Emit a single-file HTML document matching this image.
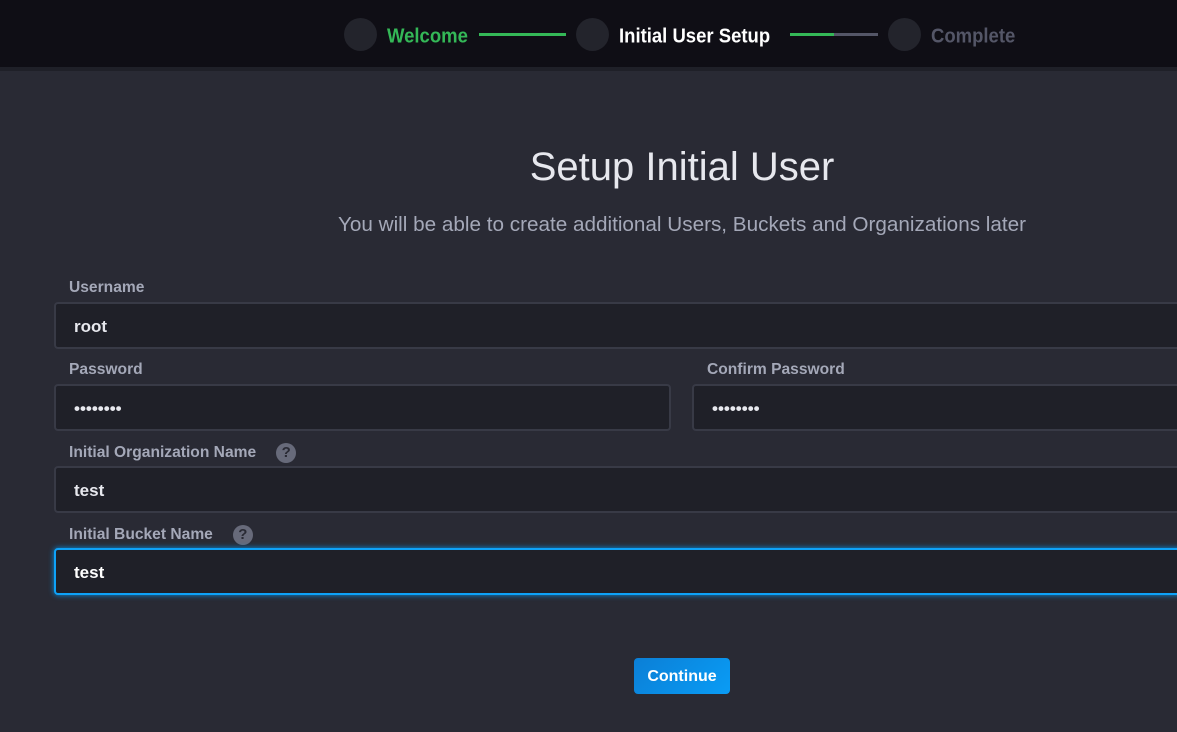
<!DOCTYPE html>
<html><head><style>
*{box-sizing:border-box;margin:0;padding:0}
body{width:1177px;height:732px;overflow:hidden;background:#292a34;font-family:"Liberation Sans",sans-serif;position:relative}
.hdr{position:absolute;left:0;top:0;width:1177px;height:67px;background:#0f0e15}
.strip{position:absolute;left:0;top:67px;width:1177px;height:4px;background:#1f2028}
.c{position:absolute;top:18px;width:33px;height:33px;border-radius:50%;background:#23242c}
.st{position:absolute;top:24px;font-weight:bold;font-size:18.5px;transform:scaleY(1.08);transform-origin:left top}
.ln{position:absolute;top:33px;height:3px}
h1{position:absolute;top:145px;left:0;width:1364px;text-align:center;font-weight:normal;font-size:40px;color:#e7e8ee}
.sub{position:absolute;top:213px;left:0;width:1364px;text-align:center;font-size:20.7px;color:#a4a8b8}
.lb{position:absolute;font-size:15.6px;font-weight:bold;color:#a4a8b8}
.in{position:absolute;height:47px;background:#1f2028;border:2px solid #383a46;border-radius:4px;color:#e7e8ee;font-weight:bold;font-size:17px;padding:13px 0 0 18px}
.q{display:inline-block;width:20px;height:20px;border-radius:50%;background:#676a7a;color:#292a34;text-align:center;font-size:15px;line-height:20px;margin-left:20px;vertical-align:middle}
.btn{position:absolute;left:634px;top:658px;width:96px;height:36px;border-radius:4px;background:linear-gradient(135deg,#0b7fd6,#0a9cf5);color:#fff;font-weight:bold;font-size:16px;text-align:center;line-height:37px}
</style></head><body>
<div class="hdr"></div><div class="strip"></div>
<div class="c" style="left:344px"></div>
<div class="st" style="left:387px;color:#34b857">Welcome</div>
<div class="ln" style="left:479px;width:87px;background:#34b857"></div>
<div class="c" style="left:576px"></div>
<div class="st" style="left:619px;color:#fff">Initial User Setup</div>
<div class="ln" style="left:790px;width:44px;background:#34b857"></div>
<div class="ln" style="left:834px;width:44px;background:#545667"></div>
<div class="c" style="left:888px"></div>
<div class="st" style="left:931px;color:#545667">Complete</div>
<h1>Setup Initial User</h1>
<div class="sub">You will be able to create additional Users, Buckets and Organizations later</div>
<div class="lb" style="left:69px;top:279px">Username</div>
<div class="in" style="left:54px;top:302px;width:1140px">root</div>
<div class="lb" style="left:69px;top:361px">Password</div>
<div class="in" style="left:54px;top:384px;width:617px">••••••••</div>
<div class="lb" style="left:707px;top:361px">Confirm Password</div>
<div class="in" style="left:692px;top:384px;width:500px">••••••••</div>
<div class="lb" style="left:69px;top:443px">Initial Organization Name<span class="q">?</span></div>
<div class="in" style="left:54px;top:466px;width:1140px">test</div>
<div class="lb" style="left:69px;top:525px">Initial Bucket Name<span class="q">?</span></div>
<div class="in" style="left:54px;top:548px;width:1140px;border-color:#0ea2f8;box-shadow:0 0 6px #0a8ee0;color:#fff">test</div>
<div class="btn">Continue</div>
</body></html>
